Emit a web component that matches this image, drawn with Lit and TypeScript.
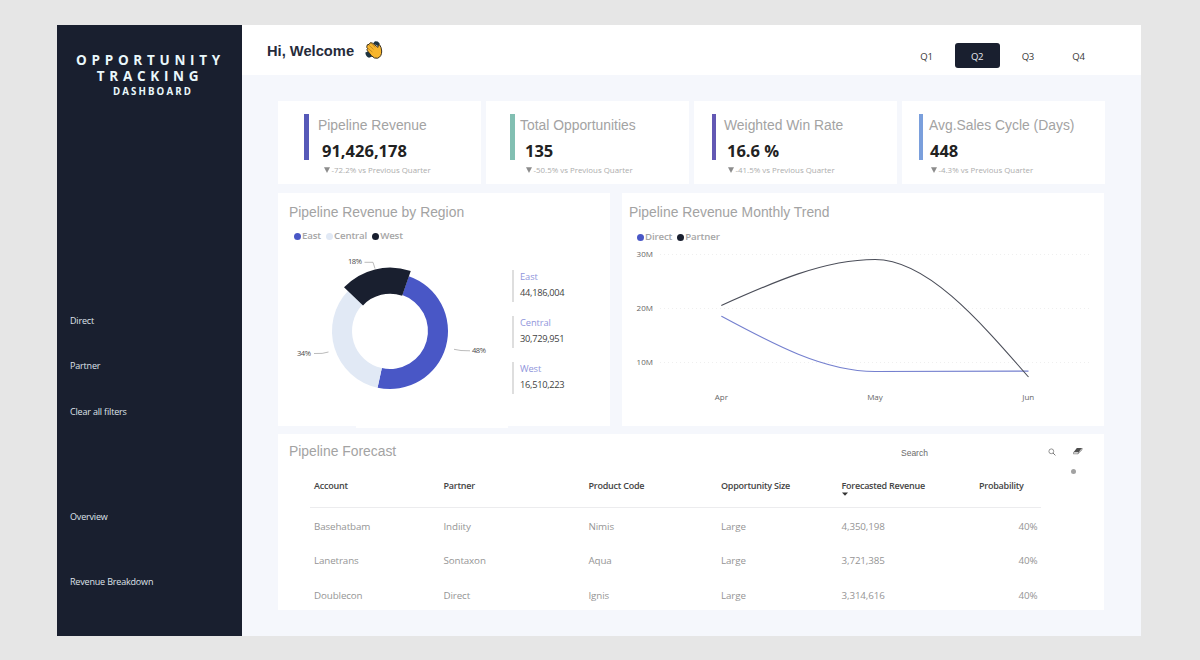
import { LitElement, html, css, svg } from "lit";
import { customElement } from "lit/decorators.js";

const KPIS = [
  { key: "revenue", label: "Pipeline Revenue", value: "91,426,178", delta: "-72.2% vs Previous Quarter" },
  { key: "opps", label: "Total Opportunities", value: "135", delta: "-50.5% vs Previous Quarter" },
  { key: "win", label: "Weighted Win Rate", value: "16.6 %", delta: "-41.5% vs Previous Quarter" },
  { key: "cycle", label: "Avg.Sales Cycle (Days)", value: "448", delta: "-4.3% vs Previous Quarter" },
];

const REGIONS = [
  { name: "East", total: "44,186,004" },
  { name: "Central", total: "30,729,951" },
  { name: "West", total: "16,510,223" },
];

const ROWS = [
  ["Basehatbam", "Indiity", "Nimis", "Large", "4,350,198", "40%"],
  ["Lanetrans", "Sontaxon", "Aqua", "Large", "3,721,385", "40%"],
  ["Doublecon", "Direct", "Ignis", "Large", "3,314,616", "40%"],
];

/** Ring segment between two clockwise angles, measured in degrees from 12 o'clock. */
function ring(cx: number, cy: number, r0: number, r1: number, a0: number, a1: number) {
  const p = (r: number, a: number) => {
    const t = (a * Math.PI) / 180;
    return `${(cx + r * Math.sin(t)).toFixed(2)} ${(cy - r * Math.cos(t)).toFixed(2)}`;
  };
  const big = a1 - a0 > 180 ? 1 : 0;
  return `M${p(r1, a0)}A${r1} ${r1} 0 ${big} 1 ${p(r1, a1)}L${p(r0, a1)}A${r0} ${r0} 0 ${big} 0 ${p(r0, a0)}Z`;
}

@customElement("donut-chart")
export class DonutChart extends LitElement {
  static styles = css`
    :host { display: block; }
    .chart { display: block; width: 222px; height: 150px; }
    .east { fill: #4957c6; }
    .central { fill: #e1e9f5; }
    .west { fill: #191f2f; }
    .leader { fill: none; stroke: #a9a9a9; stroke-width: 0.8; }
    .pct { font: 7.6px "Open Sans", "Noto Sans", sans-serif; fill: #4c4c4c; }
  `;
  render() {
    return html`<svg class="chart" viewBox="278 250 222 150">
      ${svg`
        <path class="east" d=${ring(390, 331, 38, 58, 18.9, 192.4)} />
        <path class="central" d=${ring(390, 331, 38, 58, 192.4, 313.5)} />
        <path class="west" d=${ring(390, 331, 37.2, 63.4, 313.5, 379.1)} />
        <path class="leader" d="M364.5 262.3H373L375 268.5" />
        <path class="leader" d="M454 349.3Q460 351 470 350.8" />
        <path class="leader" d="M314 353.5Q323 354 328.5 352" />
        <text class="pct" x="348" y="264" textLength="14">18%</text>
        <text class="pct" x="472" y="352.7" textLength="14">48%</text>
        <text class="pct" x="297" y="355.7" textLength="14">34%</text>
      `}
    </svg>`;
  }
}

@customElement("trend-chart")
export class TrendChart extends LitElement {
  static styles = css`
    :host { display: block; }
    .chart { display: block; width: 481px; height: 165px; }
    .grid { stroke: #ebebeb; stroke-width: 0.8; stroke-dasharray: 1 3; }
    .tick { font: 8px "Open Sans", "Noto Sans", sans-serif; fill: #666; }
    .mid { text-anchor: middle; }
    .line { fill: none; stroke-width: 1.1; }
    .partner { stroke: #4b4e59; }
    .direct { stroke: #7580cf; }
  `;
  render() {
    return html`<svg class="chart" viewBox="622 245 481 165">
      ${svg`
        <path class="grid" d="M660 254.5H1091M660 308.5H1091M660 362.5H1091" />
        <text class="tick" x="636.5" y="257" textLength="16.5">30M</text>
        <text class="tick" x="636.5" y="311" textLength="16.5">20M</text>
        <text class="tick" x="636.5" y="365" textLength="16.5">10M</text>
        <path class="line direct" d="M721.3 316.2C772.5 343.8 823.8 371.5 875 371.5L1028.5 371.1" />
        <path class="line partner" d="M721.3 305.5C772.5 282.5 823.8 259.5 875 259.5C926 259.5 977.3 318.2 1028.5 377" />
        <text class="tick mid" x="721.3" y="399.7">Apr</text>
        <text class="tick mid" x="875" y="399.7">May</text>
        <text class="tick mid" x="1028.3" y="399.7">Jun</text>
      `}
    </svg>`;
  }
}

@customElement("app-root")
export class AppRoot extends LitElement {
  static styles = css`
    :host {
      display: block; box-sizing: border-box; width: 1200px; height: 660px;
      padding: 25px 59px 24px 57px; background: #e6e6e6; overflow: hidden;
      font-family: "Open Sans", "Noto Sans", sans-serif; color: #3a3a3a;
    }
    * { box-sizing: border-box; }
    .frame { display: grid; grid-template-columns: 185px 1fr; height: 611px; background: #f5f7fc; }
    .side { background: #191f2f; display: flex; flex-direction: column; color: #dfe2ea; }
    .brand { padding-top: 27px; text-align: center; color: #e9f7fb; font-weight: 700; white-space: nowrap; }
    .b1, .b2 { font-size: 13.5px; line-height: 16px; }
    .b1 { letter-spacing: 4.7px; padding-left: 2px; }
    .b2 { letter-spacing: 4.7px; padding-left: 1px; }
    .b3 { font-size: 9.7px; line-height: 15px; letter-spacing: 2.1px; padding-left: 7px; }
    .nav { display: flex; flex-direction: column; font-size: 9px; letter-spacing: -0.18px; line-height: 12px; padding-left: 13px; }
    .filters { margin-top: 216px; }
    .partner { margin-top: 33px; }
    .clear { margin-top: 34px; }
    .pages { margin-top: 93px; }
    .breakdown { margin-top: 53px; }

    .head { height: 50px; background: #fff; display: flex; align-items: flex-start; padding-left: 25px; }
    .hello { font: 700 14.7px/20px "Liberation Sans", Arial, sans-serif; color: #262b3a; padding-top: 16px; white-space: nowrap; }
    .wave { width: 20px; height: 20px; margin: 15px 0 0 10px; }
    .quarters { margin-left: auto; display: flex; padding: 18px 40px 0 0; }
    .q { width: 45px; height: 25px; margin-left: 5.7px; border-radius: 3px; display: flex; align-items: center; justify-content: center; font-size: 9.6px; letter-spacing: -0.3px; padding-top: 2px; }
    .q.on { background: #191f2f; color: #e6e8ee; }

    .body { padding: 26px 36px 0 36px; }
    .kpis { display: grid; grid-template-columns: 203px 203px 203px 203px; column-gap: 5px; height: 83px; }
    .kpi { background: #fff; display: flex; padding: 13px 0 0 26px; white-space: nowrap; }
    .bar { width: 5px; height: 46px; flex: none; }
    .revenue .bar { background: #5659b8; }
    .opps .bar { background: #82bfb2; }
    .win .bar { background: #6358b4; width: 4px; }
    .cycle .bar { background: #7a9fdc; width: 4px; }
    .opps { padding-left: 24px; }
    .win { padding-left: 18px; }
    .cycle { padding-left: 17px; }
    .facts { padding-left: 9px; }
    .opps .facts { padding-left: 5px; }
    .win .facts { padding-left: 8px; }
    .cycle .facts { padding-left: 6px; }
    .title { font: 13.88px/20px "Liberation Sans", Arial, sans-serif; color: #a3a3a3; }
    .facts .title { line-height: 22px; }
    .num { font-size: 16.5px; line-height: 22px; font-weight: 700; color: #222; padding: 4px 0 0 4px; }
    .delta { display: flex; align-items: center; gap: 1.5px; font-size: 7.9px; line-height: 12px; color: #adadad; padding: 2px 0 0 6px; }
    .opps .num { padding-left: 5px; }
    .win .num { padding-left: 3px; }
    .cycle .num { padding-left: 1px; }
    .win .delta { padding-left: 4px; }
    .cycle .delta { padding-left: 2px; }
    .tri { width: 6px; height: 6px; fill: #8c8c8c; }

    .charts { display: grid; grid-template-columns: 332px 482px; column-gap: 12px; height: 233px; margin-top: 9px; }
    .card { background: #fff; }
    .card > .title { padding: 9px 0 0 11px; }
    .card.trend > .title { padding-left: 7px; }
    .region-card { position: relative; }
    .lip { position: absolute; left: 78px; bottom: -2px; width: 152px; height: 2px; background: #fff; }
    .legend { display: flex; align-items: center; font-size: 9.7px; letter-spacing: -0.15px; line-height: 14px; font-weight: 600; color: #a6a6a6; padding: 7px 0 0 16px; }
    .trend .legend { padding-left: 15px; padding-top: 8px; }
    .dot { width: 7px; height: 7px; border-radius: 50%; margin-right: 1px; flex: none; }
    .key { display: flex; align-items: center; margin-right: 5px; }
    .c-east { background: #4957c6; }
    .c-central { background: #e1e9f5; }
    .c-west { background: #191f2f; }
    .split { display: flex; padding-top: 7px; }
    .totals { display: flex; flex-direction: column; gap: 14px; padding: 20px 0 0 12px; }
    .total { height: 32px; border-left: 2px solid #dedede; padding-left: 6px; font-size: 9.3px; letter-spacing: -0.3px; }
    .region { color: #8f95db; line-height: 13px; letter-spacing: -0.1px; }
    .amount { color: #3f3f3f; line-height: 13px; padding-top: 3px; }
    .tchart { padding-top: 1px; }

    .forecast { width: 826px; height: 176px; margin-top: 8px; position: relative; }
    .fhead { display: flex; height: 36px; }
    .fhead .title { padding: 7px 0 0 11px; width: 623px; }
    .search { font: 8.5px/12px "Liberation Sans", Arial, sans-serif; color: #6b6b6b; padding-top: 13px; width: 147px; }
    .glass { width: 8px; height: 8px; margin: 14px 17px 0 0; }
    .eraser { width: 10px; height: 8px; margin-top: 13px; }
    .knob { position: absolute; left: 793px; top: 35px; width: 5px; height: 5px; border-radius: 50%; background: #a2a2a2; }
    .row { display: grid; grid-template-columns: 129.5px 145px 132.5px 120.5px 137.5px 58.5px; margin-left: 32px; width: 731px; padding: 3px 0 0 4px; font-size: 9.8px; letter-spacing: -0.12px; line-height: 14px; height: 34.6px; color: #959595; align-items: center; white-space: nowrap; }
    .row.top { height: 38px; border-bottom: 1.5px solid #ececee; color: #444; font-weight: 600; font-size: 9px; letter-spacing: -0.24px; align-items: start; padding-top: 9px; }
    .sorted { display: flex; flex-direction: column; }
    .caret { width: 6px; height: 4px; fill: #333; margin-top: -1px; }
    .row:not(.top) :last-child { text-align: right; }
  `;

  render() {
    return html`
      <div class="frame">
        <aside class="side">
          <div class="brand">
            <div class="b1">OPPORTUNITY</div>
            <div class="b2">TRACKING</div>
            <div class="b3">DASHBOARD</div>
          </div>
          <nav class="nav filters">
            <span>Direct</span><span class="partner">Partner</span><span class="clear">Clear all filters</span>
          </nav>
          <nav class="nav pages"><span>Overview</span><span class="breakdown">Revenue Breakdown</span></nav>
        </aside>
        <main>
          <header class="head">
            <div class="hello">Hi, Welcome</div>
            <svg class="wave" viewBox="0 0 20 20">
              <path d="M9 3.4L11 1.2L13.6 1.4L15.6 3.2L15 6.4Z" fill="#1d3440" />
              <path d="M1.4 12.6L4.6 11.2L8.2 16.6L5 17.8Q1.4 16.6 1.4 12.6Z" fill="#1d3440" />
              <path d="M2.8 6.6Q2.8 4 5 4.4Q6 1.6 8.6 3.2L14 7.4Q13.6 4.8 15.6 4.8Q17.4 7 17.7 11Q17.8 16.6 13.6 18.2Q10.4 19 7.6 15.8L3.4 10.8Q2.4 9.4 3.6 8.6Q2.6 7.8 2.8 6.6Z" fill="#f8b62d" stroke="#3a3020" stroke-width="1" />
              <path d="M5 5.2L9.6 9.4M3.8 8.2L8.4 12M7.6 3.8L11.4 7.4" stroke="#b07a1c" stroke-width=".7" />
            </svg>
            <div class="quarters">
              ${["Q1", "Q2", "Q3", "Q4"].map((q) => html`<span class="q ${q === "Q2" ? "on" : ""}">${q}</span>`)}
            </div>
          </header>
          <div class="body">
            <section class="kpis">
              ${KPIS.map((k) => html`<div class="kpi ${k.key}">
                <div class="bar"></div>
                <div class="facts">
                  <div class="title">${k.label}</div>
                  <div class="num">${k.value}</div>
                  <div class="delta"><svg class="tri" viewBox="0 0 6 6"><path d="M0 0.3H6L3 6Z" /></svg>${k.delta}</div>
                </div>
              </div>`)}
            </section>
            <section class="charts">
              <div class="card region-card">
                <div class="title">Pipeline Revenue by Region</div>
                <div class="legend">
                  <span class="key"><i class="dot c-east"></i>East</span>
                  <span class="key"><i class="dot c-central"></i>Central</span>
                  <span class="key"><i class="dot c-west"></i>West</span>
                </div>
                <div class="split">
                  <donut-chart></donut-chart>
                  <div class="totals">
                    ${REGIONS.map((r) => html`<div class="total"><div class="region">${r.name}</div><div class="amount">${r.total}</div></div>`)}
                  </div>
                </div>
                <i class="lip"></i>
              </div>
              <div class="card trend">
                <div class="title">Pipeline Revenue Monthly Trend</div>
                <div class="legend">
                  <span class="key"><i class="dot c-east"></i>Direct</span>
                  <span class="key"><i class="dot c-west"></i>Partner</span>
                </div>
                <div class="tchart"><trend-chart></trend-chart></div>
              </div>
            </section>
            <section class="card forecast">
              <div class="fhead">
                <div class="title">Pipeline Forecast</div>
                <div class="search">Search</div>
                <svg class="glass" viewBox="0 0 8 8"><circle cx="3.3" cy="3.3" r="2.4" fill="none" stroke="#777" stroke-width=".8" /><path d="M5 5L7.4 7.4" stroke="#777" stroke-width="1" /></svg>
                <svg class="eraser" viewBox="0 0 10 8"><path d="M3.8 1H9L5.9 5H.8Z" fill="#4d4d4d" /><path d="M.8 5H5.9L4.9 6.8H.3ZM5.9 5L9 1V2.8L4.9 6.8" fill="#fff" stroke="#5a5a5a" stroke-width=".6" /></svg>
              </div>
              <i class="knob"></i>
              <div class="row top">
                <span>Account</span><span>Partner</span><span>Product Code</span><span>Opportunity Size</span>
                <span class="sorted">Forecasted Revenue<svg class="caret" viewBox="0 0 6 4"><path d="M0 0.5H6L3 3.8Z" /></svg></span>
                <span>Probability</span>
              </div>
              ${ROWS.map((r) => html`<div class="row">${r.map((c) => html`<span>${c}</span>`)}</div>`)}
            </section>
          </div>
        </main>
      </div>
    `;
  }
}
